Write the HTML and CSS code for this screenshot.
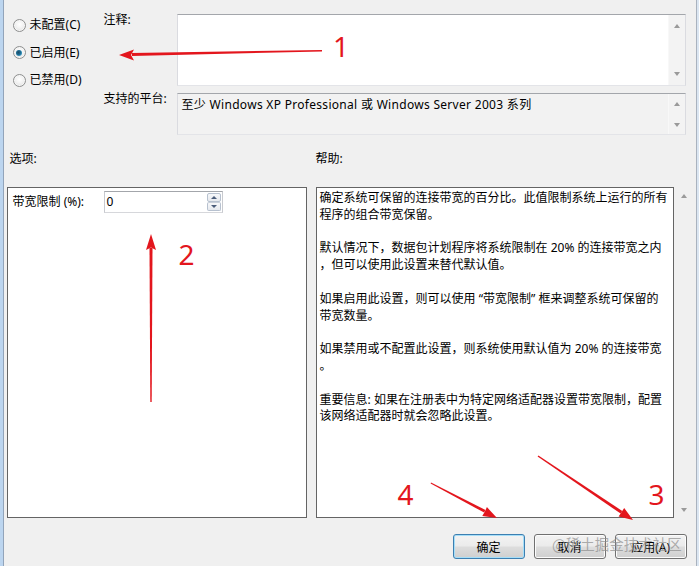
FILE: index.html
```html
<!DOCTYPE html>
<html>
<head>
  <title>带宽限制</title>
  <link rel="stylesheet" href="styles.css">
</head>
<body>

  <div class="window">
    <div class="edge-left"></div>

    <div class="dialog">
      <!-- State + comment -->
      <div class="top">
        <div class="states">
          <div class="state"><span class="radio"></span>未配置(C)</div>
          <div class="state"><span class="radio checked"></span>已启用(E)</div>
          <div class="state"><span class="radio"></span>已禁用(D)</div>
        </div>
        <div class="fields">
          <div class="field-label">注释:</div>
          <div class="box comment">
            <div class="box-text"></div>
            <div class="vscroll"><span class="up"></span><span class="down"></span></div>
          </div>
          <div class="field-label">支持的平台:</div>
          <div class="box platform">
            <div class="box-text">至少 Windows XP Professional 或 Windows Server 2003 系列</div>
            <div class="vscroll"><span class="up"></span><span class="down"></span></div>
          </div>
        </div>
      </div>

      <div class="section-titles">
        <span class="title-options">选项:</span>
        <span>帮助:</span>
      </div>

      <!-- Options / Help -->
      <div class="panels">
        <div class="options-panel">
          <div class="option-row">
            <span class="option-label">带宽限制 (%):</span>
            <div class="spinner">
              <span class="spin-value">0</span>
              <div class="spin-btns">
                <span class="spin-btn"><i class="up"></i></span>
                <span class="spin-btn"><i class="down"></i></span>
              </div>
            </div>
          </div>
        </div>
        <div class="help-panel">
          <p>确定系统可保留的连接带宽的百分比。此值限制系统上运行的所有<br>程序的组合带宽保留。</p>
          <p>默认情况下，数据包计划程序将系统限制在 20% 的连接带宽之内<br>，但可以使用此设置来替代默认值。</p>
          <p>如果启用此设置，则可以使用 “带宽限制” 框来调整系统可保留的<br>带宽数量。</p>
          <p>如果禁用或不配置此设置，则系统使用默认值为 20% 的连接带宽<br>。</p>
          <p>重要信息: 如果在注册表中为特定网络适配器设置带宽限制，配置<br>该网络适配器时就会忽略此设置。</p>
        </div>
        <div class="help-scroll"><span class="up"></span><span class="down"></span></div>
      </div>

      <div class="buttons">
        <button class="btn default">确定</button>
        <button class="btn">取消</button>
        <button class="btn">应用(A)</button>
      </div>
    </div>

    <div class="edge-right"></div>

    <div class="watermark">@稀土掘金技术社区</div>

    <!-- red annotations -->
    <svg class="marks" width="699" height="566" viewBox="0 0 699 566">
      <g fill="#e3161d" stroke="none">
        <polygon points="322,50 322,51.5 132,56 132,53" />
        <polygon points="119,55 134,49.5 131,55 134,60.5" />

        <polygon points="150.3,402 151.7,402 152.5,248 149.5,248" />
        <polygon points="151,234 156,250 151,247.5 146,250" />

        <polygon points="431,482.4 430.6,483.4 484.1,512.6 485.5,510" />
        <polygon points="497,518 482.3,515.9 484.9,511.6 486.9,507.1" />

        <polygon points="538.4,455.4 537.6,456.4 620.6,513.6 622.3,511" />
        <polygon points="633,520 618.6,516.4 621.6,512 624.2,508" />
      </g>
      <g class="mark-num" fill="#e3161d">
        <text x="341" y="57">1</text>
        <text x="186.5" y="265">2</text>
        <text x="656.5" y="505">3</text>
        <text x="405.5" y="505">4</text>
      </g>
    </svg>
  </div>

</body>
</html>
```

FILE: styles.css
```css
body {
  margin: 0;
  padding: 0;
  font-family: "Noto Sans", "Noto Sans CJK SC", sans-serif;
  font-size: 12px;
  color: #000;
  background-color: #f0f0f0;
}

.window {
  position: relative;
  display: flex;
  width: 699px;
  height: 566px;
  overflow: hidden;
}

.edge-left {
  width: 4px;
  background: linear-gradient(to right, #bcd5ef 0 3px, #92a4ba 3px 4px);
}

.edge-right {
  width: 5px;
  background: linear-gradient(to right, #f0f0f0 0 1px, #a9b2be 1px 2px, #dbe6f2 2px 5px);
}

.dialog {
  flex: 1;
  display: flex;
  flex-direction: column;
  background-color: #f0f0f0;
}

/* Top: state radios + comment */
.top {
  display: flex;
  height: 135px;
}

.states {
  width: 100px;
  box-sizing: border-box;
  padding: 17px 0 0 9px;
}

.state {
  display: flex;
  align-items: center;
  height: 16px;
  line-height: 16px;
  margin-bottom: 11.5px;
}

.radio {
  width: 11px;
  height: 11px;
  border: 1px solid #8e8f8f;
  border-radius: 50%;
  margin-right: 4px;
  background: radial-gradient(circle at 50% 40%, #ffffff 0%, #f2f2f2 45%, #d4d4d4 100%);
  box-shadow: inset 0 0 0 1px #f6f6f6;
  position: relative;
}

.radio.checked::after {
  content: "";
  position: absolute;
  left: 2.5px;
  top: 2.5px;
  width: 6px;
  height: 6px;
  border-radius: 50%;
  background: radial-gradient(circle at 40% 40%, #1c4a66 0%, #1d6d94 45%, #45a6cf 80%, #8fd0ea 100%);
}

.fields {
  display: grid;
  grid-template-columns: 73px 509px;
  grid-template-rows: 72px 42px;
  row-gap: 7px;
  padding-top: 14px;
}

.field-label {
  margin-top: -2px;
  line-height: 16px;
}

.box {
  display: flex;
  border: 1px solid;
  border-color: #a3a6ab #dadbe0 #e3e4e8 #dadbe0;
}

.box-text {
  flex: 1;
  padding: 3px 4px;
  line-height: 16px;
  white-space: nowrap;
}

.comment {
  background-color: #ffffff;
}

.platform {
  background-color: #f2f2f2;
}

.platform .box-text {
  letter-spacing: 0.3px;
}

.vscroll {
  width: 16px;
  display: flex;
  flex-direction: column;
  justify-content: space-between;
  align-items: center;
  padding: 9px 0 9px;
  background-color: #f3f3f3;
  border-left: 1px solid #f8f8f8;
}

.platform .vscroll {
  padding: 8px 0 7px;
}

.up,
.down {
  display: block;
  width: 0;
  height: 0;
  border-left: 3.5px solid transparent;
  border-right: 3.5px solid transparent;
}

.up {
  border-bottom: 4px solid #9a9a9a;
}

.down {
  border-top: 4px solid #9a9a9a;
}

/* Section titles */
.section-titles {
  display: flex;
  margin-top: 16px;
  line-height: 16px;
}

.title-options {
  width: 306px;
  padding-left: 6px;
}

/* Panels */
.panels {
  display: flex;
  height: 331px;
  margin-top: 20px;
  padding-left: 3px;
}

.options-panel {
  width: 300px;
  box-sizing: border-box;
  border: 1px solid #646464;
  background-color: #ffffff;
  margin-right: 9px;
}

.option-row {
  display: flex;
  align-items: center;
  padding: 3px 0 0 5px;
}

.option-label {
  width: 91px;
  line-height: 16px;
}

.spinner {
  display: flex;
  width: 119px;
  height: 22px;
  box-sizing: border-box;
  border: 1px solid;
  border-color: #a3a6ab #c8cacf #d6d7db #c8cacf;
  background-color: #ffffff;
}

.spin-value {
  flex: 1;
  padding-left: 2px;
  line-height: 20px;
}

.spin-btns {
  display: flex;
  flex-direction: column;
  width: 14px;
  padding: 1px 1px 1px 0;
}

.spin-btn {
  flex: 1;
  display: flex;
  align-items: center;
  justify-content: center;
  border: 1px solid #b7c1cf;
  border-radius: 2px;
  background: linear-gradient(#f7f8fa, #e6e9ee);
}

.spin-btn + .spin-btn {
  border-top-color: #c9d0da;
}

.spin-btn .up {
  border-left-width: 3px;
  border-right-width: 3px;
  border-bottom: 3px solid #4b5d7a;
}

.spin-btn .down {
  border-left-width: 3px;
  border-right-width: 3px;
  border-top: 3px solid #4b5d7a;
}

.help-panel {
  width: 358px;
  box-sizing: border-box;
  border: 1px solid #646464;
  background-color: #ffffff;
  padding: 2px 3px;
  line-height: 16.8px;
  white-space: nowrap;
  overflow: hidden;
}

.help-panel p {
  margin: 0 0 16.8px;
}

.help-scroll {
  width: 21px;
  display: flex;
  flex-direction: column;
  justify-content: space-between;
  align-items: center;
  padding: 7px 0 6px;
}

/* Buttons */
.buttons {
  display: flex;
  justify-content: flex-end;
  gap: 9px;
  margin-top: 16px;
  padding-right: 8px;
}

.btn {
  width: 72px;
  height: 25px;
  padding: 0;
  font-family: inherit;
  font-size: 12px;
  color: #000;
  border: 1px solid #707070;
  border-radius: 3px;
  background: linear-gradient(#f3f3f3 0%, #ebebeb 48%, #dddddd 52%, #cfcfcf 100%);
  box-shadow: inset 0 0 0 1px #fcfcfc;
}

.btn.default {
  border-color: #3c7fb1;
  box-shadow: inset 0 0 0 1px #a6def8;
}

/* Overlays */
.watermark {
  position: absolute;
  left: 552px;
  top: 535px;
  font-family: "Noto Sans CJK SC", sans-serif;
  font-size: 14.5px;
  line-height: 18px;
  color: rgba(140, 140, 140, 0.7);
  pointer-events: none;
}

.marks {
  position: absolute;
  left: 0;
  top: 0;
  pointer-events: none;
}

.mark-num text {
  font-family: "Noto Sans", sans-serif;
  font-size: 28px;
  text-anchor: middle;
}
```
